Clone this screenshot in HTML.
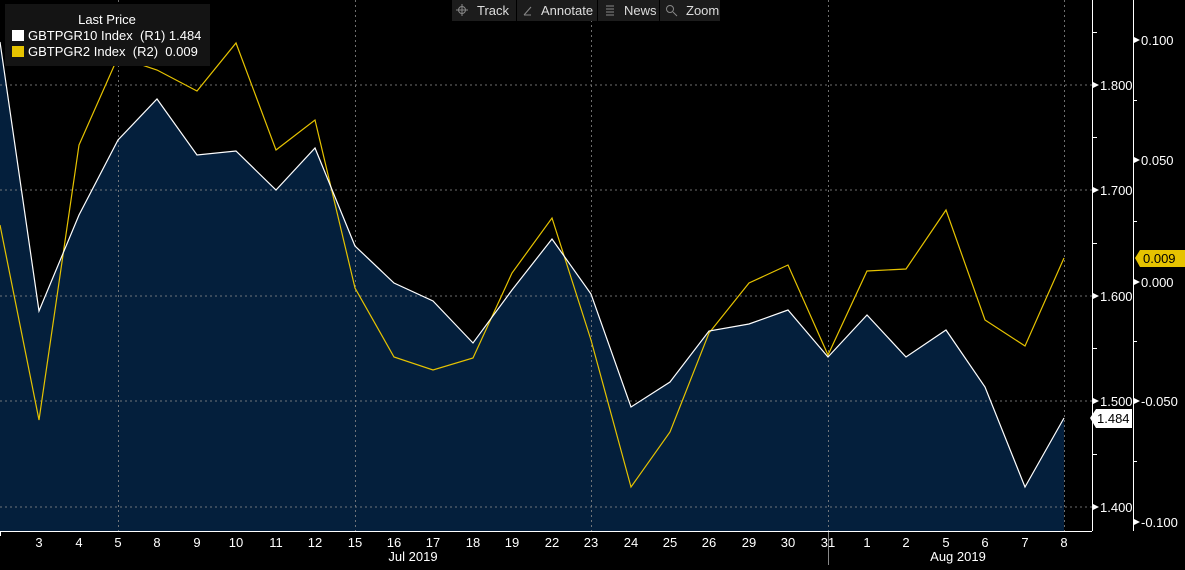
<!DOCTYPE html><html><head><style>body{margin:0;background:#000;width:1185px;height:565px;overflow:hidden;font-family:"Liberation Sans",sans-serif}
svg text{font-family:"Liberation Sans",sans-serif}</style></head><body>
<svg width="1185" height="565" viewBox="0 0 1185 565" xmlns="http://www.w3.org/2000/svg">
<rect width="1185" height="565" fill="#000"/>
<polygon fill="#041f3c" points="0,42 39,311 79,215 118,140 157,99 197,155 236,151 276,190 315,148 355,246 394,283 433,301 473,343 512,290 552,239 591,294 631,407 670,382 709,331 749,324 788,310 828,357 867,315 906,357 946,330 985,387 1025,487 1064,418 1064,531 0,531"/>
<g stroke="#8a8a8a" stroke-width="1" stroke-dasharray="2,3" opacity="0.8">
<line x1="0" y1="85" x2="1092" y2="85"/><line x1="0" y1="190" x2="1092" y2="190"/><line x1="0" y1="296" x2="1092" y2="296"/><line x1="0" y1="401" x2="1092" y2="401"/><line x1="0" y1="507" x2="1092" y2="507"/>
<line x1="118.5" y1="0" x2="118.5" y2="531"/><line x1="355.5" y1="0" x2="355.5" y2="531"/><line x1="591.5" y1="0" x2="591.5" y2="531"/><line x1="828.5" y1="0" x2="828.5" y2="531"/><line x1="1064.5" y1="0" x2="1064.5" y2="531"/>
</g>
<polyline fill="none" stroke="#e6c300" stroke-width="1.2" points="0,225 39,420 79,145 118,57 157,70 197,91 236,43 276,150 315,120 355,288 394,357 433,370 473,358 512,273 552,218 591,340 631,487 670,432 709,333 749,283 788,265 828,355 867,271 906,269 946,210 985,320 1025,346 1064,258"/>
<polyline fill="none" stroke="#fff" stroke-width="1.2" points="0,42 39,311 79,215 118,140 157,99 197,155 236,151 276,190 315,148 355,246 394,283 433,301 473,343 512,290 552,239 591,294 631,407 670,382 709,331 749,324 788,310 828,357 867,315 906,357 946,330 985,387 1025,487 1064,418"/>
<line x1="0" y1="531.5" x2="1092" y2="531.5" stroke="#fff"/>
<line x1="1092.5" y1="0" x2="1092.5" y2="531" stroke="#fff"/>
<line x1="1133.5" y1="0" x2="1133.5" y2="531" stroke="#fff"/>
<line x1="828.5" y1="532" x2="828.5" y2="565" stroke="#888"/>
<g stroke="#fff"><line x1="1093" y1="32.5" x2="1097" y2="32.5"/><line x1="1093" y1="137.5" x2="1097" y2="137.5"/><line x1="1093" y1="243.5" x2="1097" y2="243.5"/><line x1="1093" y1="348.5" x2="1097" y2="348.5"/><line x1="1093" y1="454.5" x2="1097" y2="454.5"/>
<line x1="1134" y1="100.5" x2="1137" y2="100.5"/><line x1="1134" y1="221.5" x2="1137" y2="221.5"/><line x1="1134" y1="341.5" x2="1137" y2="341.5"/><line x1="1134" y1="461.5" x2="1137" y2="461.5"/></g>
<g fill="#fff" font-size="13">
<text x="1100" y="90">1.800</text><text x="1100" y="195">1.700</text><text x="1100" y="301">1.600</text><text x="1100" y="406">1.500</text><text x="1100" y="512">1.400</text>
<text x="1141" y="45">0.100</text><text x="1141" y="165">0.050</text><text x="1141" y="287">0.000</text><text x="1141" y="406">-0.050</text><text x="1141" y="527">-0.100</text>
</g>
<g fill="#fff"><polygon points="1093,82 1099,85 1093,88"/><polygon points="1093,187 1099,190 1093,193"/><polygon points="1093,293 1099,296 1093,299"/><polygon points="1093,398 1099,401 1093,404"/><polygon points="1093,504 1099,507 1093,510"/>
<polygon points="1134,37 1140,40 1134,43"/><polygon points="1134,157 1140,160 1134,163"/><polygon points="1134,279 1140,282 1134,285"/><polygon points="1134,398 1140,401 1134,404"/><polygon points="1134,519 1140,522 1134,525"/></g>
<polygon points="1096,409 1132,409 1132,428 1096,428 1090,418" fill="#fff"/>
<text x="1097" y="423" font-size="13" fill="#000">1.484</text>
<polygon points="1140,250 1185,250 1185,267 1140,267 1135,258" fill="#e6c300"/>
<text x="1143" y="263" font-size="13" fill="#000">0.009</text>
<g fill="#fff" font-size="13" text-anchor="middle">
<text x="39" y="547">3</text><text x="79" y="547">4</text><text x="118" y="547">5</text><text x="157" y="547">8</text><text x="197" y="547">9</text><text x="236" y="547">10</text><text x="276" y="547">11</text><text x="315" y="547">12</text><text x="355" y="547">15</text><text x="394" y="547">16</text><text x="433" y="547">17</text><text x="473" y="547">18</text><text x="512" y="547">19</text><text x="552" y="547">22</text><text x="591" y="547">23</text><text x="631" y="547">24</text><text x="670" y="547">25</text><text x="709" y="547">26</text><text x="749" y="547">29</text><text x="788" y="547">30</text><text x="828" y="547">31</text><text x="867" y="547">1</text><text x="906" y="547">2</text><text x="946" y="547">5</text><text x="985" y="547">6</text><text x="1025" y="547">7</text><text x="1064" y="547">8</text>
<text x="413" y="561">Jul 2019</text><text x="958" y="561">Aug 2019</text>
</g>
<g stroke="#fff"><line x1="0.5" y1="531" x2="0.5" y2="536"/></g>
<rect x="5" y="4" width="205" height="62" fill="#141414"/>
<text x="107" y="24" font-size="13" fill="#fff" text-anchor="middle">Last Price</text>
<rect x="12" y="30" width="12" height="11" fill="#fff"/>
<rect x="12" y="46" width="12" height="11" fill="#e6c300"/>
<text x="28" y="40" font-size="13" fill="#fff" xml:space="preserve">GBTPGR10 Index  (R1) 1.484</text>
<text x="28" y="56" font-size="13" fill="#fff" xml:space="preserve">GBTPGR2 Index  (R2)  0.009</text>
<rect x="452" y="0" width="268" height="21" fill="#1c1c1c"/>
<g stroke="#000"><line x1="516.5" y1="0" x2="516.5" y2="21"/><line x1="597.5" y1="0" x2="597.5" y2="21"/><line x1="659.5" y1="0" x2="659.5" y2="21"/></g>
<g fill="#ddd" font-size="13"><text x="477" y="15">Track</text><text x="541" y="15">Annotate</text><text x="624" y="15">News</text><text x="686" y="15">Zoom</text></g>
<g stroke="#888" fill="none" stroke-width="1"><circle cx="462" cy="10" r="3.5"/><line x1="456" y1="10" x2="468" y2="10"/><line x1="462" y1="4" x2="462" y2="16"/>
<line x1="524" y1="15" x2="531" y2="7"/><line x1="524" y1="15" x2="531" y2="15"/>
<line x1="606" y1="6" x2="614" y2="6"/><line x1="606" y1="9" x2="614" y2="9"/><line x1="606" y1="12" x2="614" y2="12"/><line x1="606" y1="15" x2="614" y2="15"/>
<circle cx="670" cy="9" r="3.5"/><line x1="673" y1="12" x2="677" y2="16"/></g>
</svg></body></html>
